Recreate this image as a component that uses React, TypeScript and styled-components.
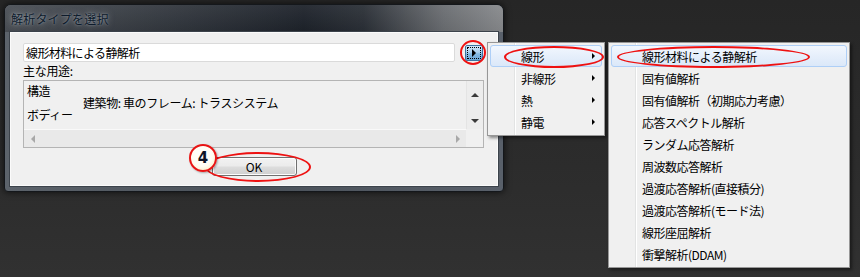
import React from "react";
import styled, { createGlobalStyle } from "styled-components";

const Global = createGlobalStyle`
  html, body { margin: 0; padding: 0; background: #2a2a2a; }
  body {
    width: 860px; height: 277px; overflow: hidden;
    font-family: "Noto Sans CJK JP", "Noto Sans", sans-serif;
  }
`;

const UI_FONT = `"Noto Sans CJK JP", "Noto Sans", sans-serif`;

const Desktop = styled.div`
  position: relative;
  width: 860px;
  height: 277px;
  overflow: hidden;
  background: linear-gradient(180deg, #262626 0%, #2c2c2c 60%, #313131 100%);
`;

/* ---------- Dialog window ---------- */
const Dialog = styled.div`
  position: absolute;
  left: 4px;
  top: 4px;
  width: 500px;
  height: 188px;
  box-sizing: border-box;
  border: 1px solid #14171b;
  border-radius: 7px 7px 4px 4px;
  background: linear-gradient(90deg, #5c636b 0%, #4a5159 50%, #59606a 100%);
  box-shadow: 0 0 7px rgba(0, 0, 0, 0.7);
  display: flex;
  flex-direction: column;
  overflow: hidden;
`;

const TitleBar = styled.div`
  height: 27px;
  flex: none;
  display: flex;
  align-items: center;
  padding-left: 6px;
  background:
    linear-gradient(180deg, rgba(255,255,255,0.06) 0%, rgba(0,0,0,0.05) 100%),
    linear-gradient(90deg, #4a4f55 0%, #30353c 35%, #1d222a 60%, #2a2f36 72%, #6a6d71 88%, #87898c 100%);
`;

const Title = styled.span`
  font-family: ${UI_FONT};
  font-size: 12px;
  color: #0e1b2b;
  text-shadow: 0 0 6px rgba(220, 230, 240, 0.55), 0 0 2px rgba(220, 230, 240, 0.4);
  letter-spacing: 0.2px;
`;

const Client = styled.div`
  flex: 1;
  margin: 0 5px 5px 5px;
  background: #f0f0f0;
  border: 1px solid #fbfbfb;
  box-shadow: 0 0 0 1px #3c434b;
  display: flex;
  flex-direction: column;
  padding: 10px 14px 0 12px;
  font-family: ${UI_FONT};
  font-size: 12px;
  color: #000;
`;

const InputRow = styled.div`
  display: flex;
  align-items: center;
  gap: 10px;
  height: 19px;
`;

const TextField = styled.div`
  width: 432px;
  height: 19px;
  box-sizing: border-box;
  background: #fff;
  border: 1px solid #dadada;
  border-radius: 2px;
  padding-left: 2px;
  display: flex;
  align-items: center;
  font-size: 12px;
  letter-spacing: -0.6px;
`;

const ArrowButton = styled.div`
  width: 18px;
  height: 16px;
  box-sizing: border-box;
  border: 1px solid #3d74a1;
  border-radius: 2px;
  background: linear-gradient(180deg, #cfe6f8 0%, #a9d0ee 45%, #86bbe3 55%, #6aa6d6 100%);
  display: flex;
  align-items: center;
  justify-content: center;
  padding: 1px;
`;

const FocusRect = styled.div`
  flex: 1;
  align-self: stretch;
  border: 1px dotted #000;
  display: flex;
  align-items: center;
  justify-content: center;
`;

const Tri = styled.span<{ $dir: "up" | "down" | "left" | "right"; $c: string; $s?: number }>`
  width: 0;
  height: 0;
  display: block;
  ${({ $dir, $c, $s = 4 }) =>
    $dir === "right"
      ? `border-top:${$s}px solid transparent;border-bottom:${$s}px solid transparent;border-left:${$s}px solid ${$c};`
      : $dir === "left"
      ? `border-top:${$s}px solid transparent;border-bottom:${$s}px solid transparent;border-right:${$s}px solid ${$c};`
      : $dir === "up"
      ? `border-left:${$s}px solid transparent;border-right:${$s}px solid transparent;border-bottom:${$s}px solid ${$c};`
      : `border-left:${$s}px solid transparent;border-right:${$s}px solid transparent;border-top:${$s}px solid ${$c};`}
`;

const Label = styled.div`
  height: 18px;
  line-height: 18px;
  letter-spacing: -0.3px;
`;

const ListBox = styled.div`
  width: 461px;
  height: 68px;
  box-sizing: border-box;
  border: 1px solid #b4b4b4;
  background: #f0f0f0;
  display: grid;
  grid-template-columns: 1fr 17px;
  grid-template-rows: 48px 18px;
`;

const ListContent = styled.div`
  padding: 4px 0 0 3px;
  display: grid;
  grid-template-columns: 56px 1fr;
  grid-auto-rows: 12px;
  line-height: 12px;
  overflow: hidden;
  font-size: 12px;
`;

const Cell = styled.div<{ $col: number; $row: number }>`
  grid-column: ${({ $col }) => $col};
  grid-row: ${({ $row }) => $row};
  white-space: nowrap;
  letter-spacing: -0.4px;
`;

const VScroll = styled.div`
  background: #ededed;
  border-left: 1px solid #e4e4e4;
  display: flex;
  flex-direction: column;
  justify-content: space-between;
  padding-top: 5px;
`;

const HScroll = styled.div`
  background: #e9e9e9;
  border-top: 1px solid #f9f9f9;
  display: flex;
  justify-content: space-between;
  align-items: center;
`;

const Corner = styled.div`
  background: #f0f0f0;
`;

const ScrollBtn = styled.div<{ $w: number; $h: number }>`
  width: ${({ $w }) => $w}px;
  height: ${({ $h }) => $h}px;
  display: flex;
  align-items: center;
  justify-content: center;
`;

const Footer = styled.div`
  display: flex;
  justify-content: center;
  margin-top: 9px;
  padding-left: 2px;
`;

const OkButton = styled.div`
  width: 85px;
  height: 19px;
  box-sizing: border-box;
  border: 1px solid #707070;
  border-radius: 3px;
  box-shadow: inset 0 0 0 1px #fcfcfc;
  background: linear-gradient(180deg, #f2f2f2 0%, #ebebeb 48%, #dddddd 52%, #cfcfcf 100%);
  display: flex;
  align-items: center;
  justify-content: center;
  font-size: 12px;
`;

/* ---------- Popup menus ---------- */
const Menu = styled.div<{ $left: number; $top: number; $width: number }>`
  position: absolute;
  left: ${({ $left }) => $left}px;
  top: ${({ $top }) => $top}px;
  width: ${({ $width }) => $width}px;
  box-sizing: border-box;
  border: 1px solid #979797;
  padding: 2px;
  background: linear-gradient(
    90deg,
    #f0f0f0 26px,
    #e2e3e3 26px,
    #e2e3e3 27px,
    #ffffff 27px,
    #ffffff 28px,
    #f0f0f0 28px
  );
  box-shadow: 2px 2px 3px rgba(0, 0, 0, 0.45);
  font-family: ${UI_FONT};
  font-size: 12px;
  color: #000;
  display: flex;
  flex-direction: column;
`;

const MenuItem = styled.div<{ $active?: boolean }>`
  height: 22px;
  box-sizing: border-box;
  display: flex;
  align-items: center;
  justify-content: space-between;
  padding: 0 6px 0 30px;
  border: 1px solid ${({ $active }) => ($active ? "#aecff7" : "transparent")};
  border-radius: 3px;
  background: ${({ $active }) =>
    $active ? "linear-gradient(180deg, #f2f7fe 0%, #e6effb 50%, #dbe8f9 100%)" : "transparent"};
  white-space: nowrap;
  letter-spacing: -0.5px;
`;

/* ---------- Annotations ---------- */
const Ring = styled.div<{ $left: number; $top: number; $w: number; $h: number }>`
  position: absolute;
  left: ${({ $left }) => $left}px;
  top: ${({ $top }) => $top}px;
  width: ${({ $w }) => $w}px;
  height: ${({ $h }) => $h}px;
  box-sizing: border-box;
  border: 2px solid #ee1111;
  border-radius: 50%;
  pointer-events: none;
`;

const Badge = styled.div`
  position: absolute;
  left: 189px;
  top: 144px;
  width: 28px;
  height: 28px;
  box-sizing: border-box;
  border: 2.5px solid #e81414;
  border-radius: 50%;
  background: radial-gradient(circle at 45% 40%, #ffffff 0%, #fffdf2 55%, #f6e7b0 100%);
  display: flex;
  align-items: center;
  justify-content: center;
  font-family: "DejaVu Sans", "Liberation Sans", sans-serif;
  font-weight: bold;
  font-size: 15px;
  color: #0f1526;
  box-shadow: 1px 1px 2px rgba(0, 0, 0, 0.3);
`;

const menu1 = ["線形", "非線形", "熱", "静電"];
const menu2 = [
  "線形材料による静解析",
  "固有値解析",
  "固有値解析（初期応力考慮）",
  "応答スペクトル解析",
  "ランダム応答解析",
  "周波数応答解析",
  "過渡応答解析(直接積分)",
  "過渡応答解析(モード法)",
  "線形座屈解析",
  "衝撃解析(DDAM)",
];

export default function App() {
  return (
    <Desktop>
      <Global />
      <Dialog>
        <TitleBar>
          <Title>解析タイプを選択</Title>
        </TitleBar>
        <Client>
          <InputRow>
            <TextField>線形材料による静解析</TextField>
            <ArrowButton>
              <FocusRect>
                <Tri $dir="right" $c="#000" $s={4} />
              </FocusRect>
            </ArrowButton>
          </InputRow>
          <Label>主な用途:</Label>
          <ListBox>
            <ListContent>
              <Cell $col={1} $row={1}>構造</Cell>
              <Cell $col={2} $row={2}>建築物: 車のフレーム: トラスシステム</Cell>
              <Cell $col={1} $row={3}>ボディー</Cell>
            </ListContent>
            <VScroll>
              <ScrollBtn $w={16} $h={17}>
                <Tri $dir="up" $c="#3a3a3a" $s={4} />
              </ScrollBtn>
              <ScrollBtn $w={16} $h={17}>
                <Tri $dir="down" $c="#3a3a3a" $s={4} />
              </ScrollBtn>
            </VScroll>
            <HScroll>
              <ScrollBtn $w={17} $h={17}>
                <Tri $dir="left" $c="#a8a8a8" $s={4} />
              </ScrollBtn>
              <ScrollBtn $w={17} $h={17}>
                <Tri $dir="right" $c="#a8a8a8" $s={4} />
              </ScrollBtn>
            </HScroll>
            <Corner />
          </ListBox>
          <Footer>
            <OkButton>OK</OkButton>
          </Footer>
        </Client>
      </Dialog>

      <Menu $left={487} $top={42} $width={118}>
        {menu1.map((t, i) => (
          <MenuItem key={t} $active={i === 0}>
            <span>{t}</span>
            <Tri $dir="right" $c="#000" $s={3.5} />
          </MenuItem>
        ))}
      </Menu>

      <Menu $left={608} $top={42} $width={242}>
        {menu2.map((t, i) => (
          <MenuItem key={t} $active={i === 0}>
            <span>{t}</span>
          </MenuItem>
        ))}
      </Menu>

      <Ring $left={460} $top={40} $w={26} $h={25} />
      <Ring $left={504} $top={46} $w={100} $h={22} />
      <Ring $left={617} $top={46} $w={193} $h={22} />
      <Ring $left={205} $top={152} $w={106} $h={30} />
      <Badge>4</Badge>
    </Desktop>
  );
}
